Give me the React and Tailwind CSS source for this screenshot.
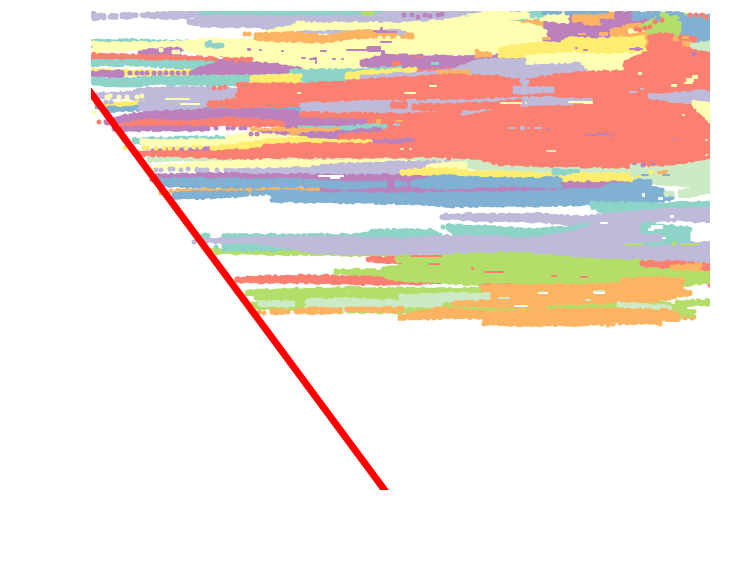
const C = {
  T: '#8dd3c7', P: '#ffffb3', L: '#bebada', R: '#fb8072', B: '#80b1d3',
  O: '#fdb462', G: '#b3de69', M: '#ccebc5', V: '#bc80bd', Y: '#ffed6f', W: '#ffffff',
};

// Each band is a colour key followed by "x,top,bottom" stations from left to right.
const bands = [
  // top rows
  ['L', '91,12,19 104,13,19'], ['L', '110,14,18 116,14,19'], ['L', '120,13,18 136,12,17'],
  ['L', '142,13,17 170,11,18 230,11,17 300,11,22 520,11,30'],
  ['L', '187,19,23 205,18,26 260,17,27 280,15,32 400,14,34 460,15,30'],
  ['T', '200,9,13 240,9,13 300,9,14 350,9,13 380,9,12'],
  ['G', '362,9,14 372,9,14'],
  ['P', '440,24,50 460,16,50 490,11,50 540,12,50 620,11,30'],
  ['T', '500,15,22 540,12,23'], ['T', '465,17,20 500,17,20'],
  ['P', '480,12,20 535,13,18'],
  ['O', '500,22,30 540,20,30 600,22,30'],
  ['V', '542,11,40 580,14,43 620,11,42 655,12,36 665,14,34'],
  ['P', '500,26,46 520,26,46 540,27,40 545,30,38'],
  ['P', '540,13,20 565,14,22'], ['T', '530,10,16 542,10,16'], ['B', '542,9,13 560,9,13'],
  ['O', '572,15,21 590,12,19 612,13,20'], ['O', '583,19,24 612,18,24'],
  ['P', '560,14,22 567,14,22'],
  ['O', '610,27,34 625,25,31 640,23,28'], ['O', '610,32,41 625,33,41'],
  ['B', '565,9,13 590,9,13 605,9,12'], ['V', '600,18,28 620,20,26'],
  ['B', '632,12,20 645,12,18 658,10,18'], ['G', '640,26,34 660,14,40 690,14,38'],
  ['P', '628,29,35 642,31,36'],
  ['B', '655,12,20 682,12,19'], ['B', '680,17,35 690,14,42 710,14,50'],
  ['G', '660,13,21 677,15,33'], ['O', '615,36,39 645,32,36'],

  ['T', '91,40,47 120,39,48 160,40,49 210,41,49 230,44,49'],
  ['P', '91,42,52 140,42,49 180,41,48 205,38,55 250,39,62 270,38,68 300,36,69 360,34,70 400,32,56 440,23,53 480,14,54 540,26,48'],
  ['P', '265,31,35 300,23,29 350,22,29 400,23,28 440,20,42 480,18,50'],
  ['P', '296,21,26 303,21,26'],
  ['O', '254,33,39 290,32,41 325,35,42 350,31,38 370,30,37 412,32,38'],
  ['T', '205,42,46 222,44,47'],
  ['V', '138,51,56 155,48,57 180,47,57'],
  ['V', '360,61,66 385,54,68 430,55,70 480,56,67 530,52,60 550,52,60'],
  ['R', '392,62,69 420,56,75 450,68,78'],
  ['V', '400,58,68 445,57,67'],
  ['R', '91,53,59 130,54,60 170,55,62 210,57,64 230,58,62 251,58,61'],
  ['T', '91,60,65 140,60,65 200,61,69 260,64,70'],
  ['Y', '91,69,74 160,70,75 270,70,77'],
  ['V', '91,71,76 122,70,76'], ['V', '189,71,75 210,64,74 220,60,74 245,61,74 280,64,73 300,67,72'],
  ['T', '290,69,83 360,69,82 400,66,77'],
  ['T', '91,77,84 130,78,86 150,76,84 250,75,85 350,72,82'],
  ['Y', '250,75,84 300,74,83'], ['Y', '345,73,78 370,70,76 415,68,75'],
  ['L', '360,75,81 450,70,78 480,59,80 540,58,82 590,60,78 650,68,82'],
  ['O', '438,71,76 468,70,77'],
  ['Y', '498,47,57 540,42,55 560,43,55 570,37,55 600,38,55 648,36,55'],
  ['O', '475,50,57 490,53,56'],
  ['P', '526,55,63 580,52,61 590,54,72 650,53,75 690,56,70'],
  ['O', '645,36,46 690,38,53'], ['M', '690,44,70 710,40,90'],
  ['R', '647,36,48 660,33,48 672,33,45'], ['R', '679,35,40 695,37,41'],
  ['R', '647,45,50 655,43,48 680,41,48'],

  // upper left rows, below the teal band
  ['L', '91,93,98 130,92,97 138,88,100 180,86,107 250,89,107 500,88,112'],
  ['Y', '95,103,107 150,101,106'], ['B', '105,107,111 150,105,109 230,107,111 300,106,112'],
  ['L', '138,101,110 180,97,112 205,98,112'],
  ['V', '104,119,123 140,112,122 205,109,119 250,108,121 300,111,125 330,114,126'],
  ['R', '120,124,128 145,119,129 180,121,127 230,117,125 280,121,126 380,117,129'],
  ['V', '112,127,130 160,126,130 208,126,130'],
  ['T', '300,126,131 390,124,129'],
  ['O', '250,128,133 300,128,134 350,127,132'],
  ['V', '247,132,137 300,132,138 380,129,138'],
  ['P', '225,136,144 250,131,146 300,137,143'],
  ['T', '132,138,142 170,137,143 223,136,143'], ['P', '140,139,144 190,139,145 225,139,144'],
  ['V', '151,149,153 200,147,152 235,149,154'],
  ['Y', '210,146,151 250,142,151 270,139,151'],

  // large red field
  ['R', '235,94,107 238,83,98 300,83,105 345,81,104 380,78,103 450,74,102 500,76,101 515,79,99 530,79,108 555,74,115 590,71,115 640,71,150 690,75,140'],
  ['R', '207,102,106 230,99,107 300,99,106'],
  ['R', '430,104,150 470,101,155 510,98,163 550,97,166 610,95,168 640,71,164 690,75,162 710,105,158'],
  ['R', '623,62,67 635,56,78 650,50,90 680,46,90 710,53,90'],
  ['L', '300,103,113 360,101,113 420,100,114 470,100,113 500,98,106 550,97,104 590,99,102'],
  ['R', '391,102,107 405,102,107'], ['R', '412,104,109 440,104,110 490,102,108 520,99,112'],
  ['R', '300,112,121 380,113,123 430,114,149 460,109,155'],
  ['R', '380,114,148 450,112,148'],
  ['V', '285,119,127 350,118,125 365,119,127'], ['T', '298,126,130 340,127,130 370,124,129 385,124,128'],
  ['O', '290,128,133 338,128,132'],
  ['V', '300,132,138 340,131,138 380,127,136'],
  ['R', '338,134,140 380,132,141 450,128,146'],
  ['V', '370,140,144 392,139,144 412,139,141'],
  ['Y', '265,139,149 300,137,145 335,140,144 370,141,143'],
  ['M', '147,156,161 180,155,160 260,155,161 400,155,163 450,154,166 550,160,176 710,159,187'],
  ['R', '135,151,155 153,150,155 210,151,157 260,148,159 265,144,157 300,143,157 400,143,157 445,141,156'],
  ['R', '437,140,155 475,140,158 500,140,164 570,140,166 630,140,167 680,140,163 710,130,157'],
  ['L', '648,94,97 660,94,99 680,92,102 700,90,103 710,91,103'],
  ['L', '513,87,93 552,87,91'], ['L', '520,78,92 527,80,92'],
  ['P', '692,101,104 702,102,114 710,103,122'],

  // cream to blue rows
  ['P', '152,165,170 210,161,169 260,160,167 400,160,165 465,163,172'],
  ['L', '195,168,172 207,169,172'], ['L', '224,169,172 275,168,173 310,167,173 325,164,175 400,161,174 455,161,172'],
  ['P', '426,164,169 465,161,171'],
  ['V', '150,174,180 220,173,179 300,174,181 350,175,184 450,173,193 550,176,190 625,177,189'],
  ['V', '620,177,184 634,177,182'],
  ['Y', '400,170,174 430,168,174 455,168,175 458,170,180 500,171,180 560,173,180 640,173,180'],
  ['O', '175,189,194 300,187,192 350,187,192'],
  ['V', '320,186,194 440,184,194'],
  ['B', '158,178,186 220,178,187 300,179,186 350,182,188 385,181,186'],
  ['B', '395,181,186 400,181,186'], ['B', '410,181,186 440,175,188 520,178,185 560,177,188'],
  ['B', '172,192,198 200,191,198 247,191,195'], ['B', '251,191,194 290,190,194'], ['B', '270,193,201 290,190,201 320,192,202 400,193,203 450,192,206 500,192,206 550,190,205 600,188,204 625,182,205 650,186,203 672,194,199'],
  ['B', '605,184,190 640,182,190 662,189,195'],
  ['M', '630,165,175 640,163,180 655,172,182 710,160,182'],
  ['M', '678,190,196 695,188,196 710,183,190'], ['M', '664,192,195 672,192,195'],
  ['M', '688,175,195 710,170,192'],
  ['T', '552,169,174 570,169,174'], ['B', '633,179,184 650,180,184'],

  // lavender, teal and green rows
  ['T', '590,202,206 610,202,216 650,203,222 709,202,214'],
  ['T', '672,202,206 710,202,212'],
  ['L', '440,214,218 470,213,220 500,214,221 540,213,221 580,216,225 610,213,219 645,210,221 680,208,220 710,208,222'],
  ['T', '200,234,239 208,234,240'], ['T', '222,234,242 280,234,242 360,234,240 372,230,240 400,229,240 430,229,240 440,234,243'],
  ['T', '448,224,229 460,230,238 480,229,239 520,229,239 570,226,240 620,220,247 690,227,245'],
  ['T', '446,224,229 470,225,232 500,226,232 520,228,232'],
  ['G', '215,249,253 300,248,254 410,248,256'],
  ['T', '222,244,250 270,242,250 320,243,248'],
  ['L', '204,238,242 260,237,243 320,236,253 400,238,254 450,235,254 520,237,256 600,239,262 650,246,264 710,241,265'],
  ['L', '540,236,245 575,231,245 610,218,244 640,220,238'], ['L', '610,235,242 660,234,240'],
  ['R', '366,257,261 395,256,262 440,260,266'],
  ['G', '395,257,260 450,254,275 520,252,286 580,258,286 650,260,286 690,267,284'],
  ['R', '235,278,281 260,276,282 300,275,282 360,275,284 440,276,283'],
  ['G', '334,269,273 380,269,275 390,265,279 420,265,281 500,265,286'],
  ['R', '640,261,265 680,261,270 710,264,285'], ['O', '670,265,273 700,264,272'],
  ['G', '640,267,286 675,270,287 709,272,282'],
  ['R', '480,285,288 510,284,287'],
  ['G', '245,290,295 300,288,293 350,287,291 480,288,294'], ['G', '254,294,299 300,292,300 360,292,300 480,290,311 520,295,312 580,300,310 620,300,308'],
  ['G', '250,303,308 300,294,309 360,294,312 480,294,313'],
  ['G', '600,296,316 660,300,318 694,310,317'], ['G', '675,301,307 710,299,304'],
  ['O', '480,285,299 520,284,305 580,284,303 650,282,302 690,291,294'],
  ['O', '620,278,295 660,277,295 683,278,295'], ['O', '451,301,304 480,298,306 545,297,309'],
  ['M', '258,301,306 293,301,306'], ['M', '305,299,309 345,298,312 400,300,306 440,298,306'],
  ['M', '399,295,298 440,293,301 488,293,298'], ['M', '617,302,307 670,305,311'],
  ['O', '270,309,313 288,309,313'], ['O', '294,309,313 315,307,313 340,308,312'], ['O', '345,308,311 402,307,311'],
  ['O', '398,315,319 440,307,318 500,311,318 550,309,322 610,308,320 670,310,320'],
  ['O', '482,321,324 520,313,325 570,310,325 620,312,322 660,318,324'],
  ['O', '660,308,320 678,312,320'],
];

const dots = [
  ['L', '110,17 142,15 147,15 152,15 194,242'], ['O', '245,34 249,34 161,193 171,191 259,312 264,313 382,310 387,310 676,293 692,318 685,318'],
  ['V', '130,73 137,73 142,73 147,73 154,73 160,73 166,73 172,73 178,73 184,73 216,128 228,128 233,128 241,128 245,128 404,15 412,15 418,17 425,15 430,16 438,15 442,14 694,54 251,134 257,134'],
  ['P', '107,97 110,96 119,97 127,97 137,97 142,96 161,50 174,52 178,52 94,112 380,38 388,38 398,38'],
  ['R', '99,122 214,88 220,88 225,87 236,61 242,59 247,60 237,279 243,279 247,279 392,105 640,30 650,27 655,22 662,20 636,29 645,28 690,15 696,15 702,15 706,17 449,158 399,106 405,105'],
  ['Y', '125,148 144,148 148,148 156,148 164,148 170,148 177,148 186,148 194,147 200,147'],
  ['L', '156,170 161,170 170,169 173,169 181,170 188,169 97,97 106,102 111,102 201,170 206,170 217,170'],
  ['B', '97,107 109,108 115,109 398,183 405,184 636,14 643,15 671,14 679,14'],
  ['T', '443,227 216,247 592,203'], ['G', '212,250 216,251 248,293'],
  ['V', '643,165'],
  ['O', '587,323 593,323 602,324 608,325 613,324 620,323 627,323 635,322 641,322 650,322 656,321'],
];

// Small exposed patches, as x,y,width,height.
const flecks = [
  ['V', '247,48,4,3 259,49,3,2 281,50,3,2 301,57,5,2 309,58,8,2 332,58,4,2 341,58,3,2 315,60,2,4 313,57,4,3 366,47,10,2 380,27,3,5 373,30,14,2 346,49,22,2 367,46,14,6 381,50,4,5 376,31,30,2 380,41,12,2 320,50,7,2'],
  ['L', '508,127,8,2 520,126,5,4 527,127,3,2 534,127,8,2 640,88,4,2 648,95,8,2 629,91,8,2 397,31,8,4'],
  ['V', '585,134,12,2 596,133,14,2 611,135,2,3 547,128,3,2 673,138,3,2 583,49,5,2 629,48,14,2 635,47,5,4 575,47,3,2 388,141,16,3 632,163,5,2 650,163,6,2'],
  ['P', '429,85,8,2 404,92,12,2 297,92,4,2 638,72,4,3 686,78,8,4 692,75,6,4 684,82,9,2 671,84,6,3 682,114,3,2 525,102,2,2'],
  ['P', '500,102,22,2 568,101,18,2 165,98,25,2 180,103,20,2 583,101,10,3'],
  ['M', '546,150,10,2 400,148,4,2 409,148,3,2 705,139,3,2 705,154,3,2'],
  ['T', '393,123,7,3 208,40,4,3 570,169,10,4 431,62,8,3'],
  ['O', '376,119,5,5 395,120,8,2 682,36,7,3 657,171,10,3 662,170,6,3 542,37,9,3 578,33,8,2 599,32,9,4'],
  ['B', '641,174,8,2 662,174,8,2'], ['Y', '648,170,6,4 636,176,5,2'],
  ['R', '484,271,20,2 471,267,3,3 551,275,6,2 580,276,8,2 428,263,12,2 410,255,32,2'],
  ['W', '593,291,12,3 538,292,10,2 514,305,14,2 651,225,12,4 648,228,6,3 662,237,4,2 658,197,5,3 642,193,3,4 218,57,5,2 670,215,4,3 318,175,26,2 330,176,10,3 600,222,8,2'],
  ['M', '540,291,5,2 596,290,8,2 498,297,12,2 585,299,6,2'], ['G', '625,243,18,2 672,241,4,5 680,243,20,2'],
];

const noise = (n) => {
  const v = Math.sin(n * 12.9898) * 43758.5453;
  return v - Math.floor(v);
};

// Returns the filled core of a band and the round marks along its two edges.
const shape = (spec) => {
  const rows = spec.split(' ').map((s) => s.split(',').map(Number));
  const top = [];
  const bottom = [];
  rows.forEach(([x, t, b], i) => {
    const next = rows[i + 1];
    const n = next ? Math.max(1, Math.round((next[0] - x) / 3)) : 1;
    for (let k = 0; k < n; k += 1) {
      const f = k / n;
      const px = next ? x + (next[0] - x) * f : x;
      const pt = next ? t + (next[1] - t) * f : t;
      const pb = next ? b + (next[2] - b) * f : b;
      const mid = (pt + pb) / 2;
      const cx = i === 0 && k === 0 ? px + 2 : px;
      top.push([cx, Math.min(pt + 2, mid) + noise(px + t * 3) * 2 - 1]);
      bottom.push([cx, Math.max(pb - 1, mid) + noise(px * 2 + b) * 2 - 1]);
    }
  });
  const all = [...top, ...bottom.reverse()].map(([x, y]) => [x.toFixed(1), y.toFixed(1)]);
  return `M${all.map((p) => p.join(' ')).join('L')}Z${all.map((p) => `M${p.join(' ')}h0`).join('')}`;
};

const split = (path) => {
  const at = path.indexOf('Z') + 1;
  return [path.slice(0, at), path.slice(at)];
};

function Band({ color, spec }) {
  const [core, marks] = split(shape(spec));
  return (
    <g>
      <path d={core} fill={color} stroke={color} strokeWidth="1" />
      <path d={marks} fill="none" stroke={color} strokeWidth="5" strokeLinecap="round" />
    </g>
  );
}

function Plot() {
  return (
    <svg viewBox="0 0 736 574" className="block h-auto w-full" role="img" aria-label="Scatter plot with a red boundary line">
      <defs>
        <clipPath id="area"><rect x="91" y="11" width="619" height="479" /></clipPath>
      </defs>
      <g clipPath="url(#area)">
        {bands.map(([c, spec], i) => <Band key={i} color={C[c]} spec={spec} />)}
        {flecks.map(([c, spec]) => spec.split(' ').map((s) => {
          const [x, y, w, h] = s.split(',').map(Number);
          return <rect key={c + s} x={x} y={y} width={w} height={h} rx="1" fill={C[c]} />;
        }))}
        {dots.map(([c, spec]) => spec.split(' ').map((s) => {
          const [x, y] = s.split(',').map(Number);
          return <circle key={c + s} cx={x} cy={y} r="2.5" fill={C[c]} />;
        }))}
        <path d="M85 85L389 496" stroke="#ff0000" strokeWidth="7" />
      </g>
    </svg>
  );
}

export default function App() {
  return (
    <main className="w-full bg-white">
      <Plot />
    </main>
  );
}
